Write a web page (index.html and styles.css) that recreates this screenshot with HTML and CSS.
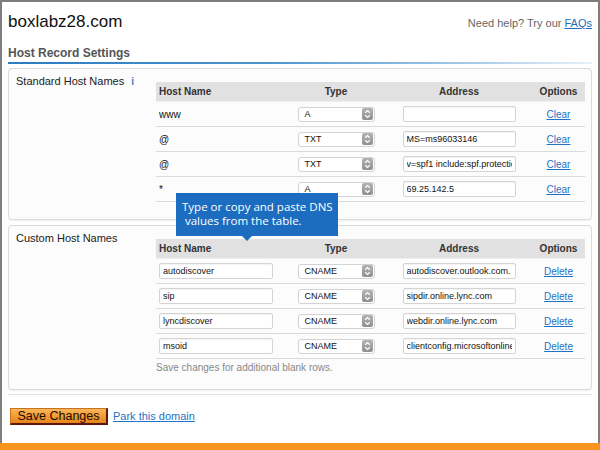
FILE: index.html
```html
<!DOCTYPE html>
<html>
<head>
<meta charset="utf-8">
<link rel="stylesheet" href="styles.css">
</head>
<body>
<div class="page">
  <div class="frame">
    <header class="top">
      <h1 class="domain">boxlabz28.com</h1>
      <div class="help">Need help? Try our <a href="#">FAQs</a></div>
    </header>
    <h2 class="section">Host Record Settings</h2>
    <div class="rule"></div>

    <section class="panel">
      <div class="panel-label">Standard Host Names <span class="info">i</span></div>
      <div class="panel-body">
        <table class="dns">
          <colgroup><col class="w-host"><col class="w-type"><col class="w-addr"><col class="w-opt"></colgroup>
          <thead><tr><th class="c-host">Host Name</th><th>Type</th><th>Address</th><th class="c-opt">Options</th></tr></thead>
          <tbody>
            <tr><td class="c-host">www</td><td><div class="sel"><span>A</span><span class="step"><svg width="7" height="10" viewBox="0 0 7 10"><path d="M1.2 3.8 L3.5 1.6 L5.8 3.8 M1.2 6.2 L3.5 8.4 L5.8 6.2" fill="none" stroke="#fff" stroke-width="1.2"/></svg></span></div></td><td><input class="field" value=""></td><td class="c-opt"><a href="#">Clear</a></td></tr>
            <tr><td class="c-host">@</td><td><div class="sel"><span>TXT</span><span class="step"><svg width="7" height="10" viewBox="0 0 7 10"><path d="M1.2 3.8 L3.5 1.6 L5.8 3.8 M1.2 6.2 L3.5 8.4 L5.8 6.2" fill="none" stroke="#fff" stroke-width="1.2"/></svg></span></div></td><td><input class="field" value="MS=ms96033146"></td><td class="c-opt"><a href="#">Clear</a></td></tr>
            <tr><td class="c-host">@</td><td><div class="sel"><span>TXT</span><span class="step"><svg width="7" height="10" viewBox="0 0 7 10"><path d="M1.2 3.8 L3.5 1.6 L5.8 3.8 M1.2 6.2 L3.5 8.4 L5.8 6.2" fill="none" stroke="#fff" stroke-width="1.2"/></svg></span></div></td><td><input class="field" value="v=spf1 include:spf.protection.outlook.com -all"></td><td class="c-opt"><a href="#">Clear</a></td></tr>
            <tr><td class="c-host">*</td><td><div class="sel"><span>A</span><span class="step"><svg width="7" height="10" viewBox="0 0 7 10"><path d="M1.2 3.8 L3.5 1.6 L5.8 3.8 M1.2 6.2 L3.5 8.4 L5.8 6.2" fill="none" stroke="#fff" stroke-width="1.2"/></svg></span></div></td><td><input class="field" value="69.25.142.5"></td><td class="c-opt"><a href="#">Clear</a></td></tr>
          </tbody>
        </table>
      </div>
    </section>

    <section class="panel custom">
      <div class="panel-label">Custom Host Names</div>
      <div class="panel-body">
        <table class="dns">
          <colgroup><col class="w-host"><col class="w-type"><col class="w-addr"><col class="w-opt"></colgroup>
          <thead><tr><th class="c-host">Host Name</th><th>Type</th><th>Address</th><th class="c-opt">Options</th></tr></thead>
          <tbody>
            <tr><td class="c-host"><input class="field host" value="autodiscover"></td><td><div class="sel"><span>CNAME</span><span class="step"><svg width="7" height="10" viewBox="0 0 7 10"><path d="M1.2 3.8 L3.5 1.6 L5.8 3.8 M1.2 6.2 L3.5 8.4 L5.8 6.2" fill="none" stroke="#fff" stroke-width="1.2"/></svg></span></div></td><td><input class="field" value="autodiscover.outlook.com."></td><td class="c-opt"><a href="#">Delete</a></td></tr>
            <tr><td class="c-host"><input class="field host" value="sip"></td><td><div class="sel"><span>CNAME</span><span class="step"><svg width="7" height="10" viewBox="0 0 7 10"><path d="M1.2 3.8 L3.5 1.6 L5.8 3.8 M1.2 6.2 L3.5 8.4 L5.8 6.2" fill="none" stroke="#fff" stroke-width="1.2"/></svg></span></div></td><td><input class="field" value="sipdir.online.lync.com"></td><td class="c-opt"><a href="#">Delete</a></td></tr>
            <tr><td class="c-host"><input class="field host" value="lyncdiscover"></td><td><div class="sel"><span>CNAME</span><span class="step"><svg width="7" height="10" viewBox="0 0 7 10"><path d="M1.2 3.8 L3.5 1.6 L5.8 3.8 M1.2 6.2 L3.5 8.4 L5.8 6.2" fill="none" stroke="#fff" stroke-width="1.2"/></svg></span></div></td><td><input class="field" value="webdir.online.lync.com"></td><td class="c-opt"><a href="#">Delete</a></td></tr>
            <tr><td class="c-host"><input class="field host" value="msoid"></td><td><div class="sel"><span>CNAME</span><span class="step"><svg width="7" height="10" viewBox="0 0 7 10"><path d="M1.2 3.8 L3.5 1.6 L5.8 3.8 M1.2 6.2 L3.5 8.4 L5.8 6.2" fill="none" stroke="#fff" stroke-width="1.2"/></svg></span></div></td><td><input class="field" value="clientconfig.microsoftonline-p.net"></td><td class="c-opt"><a href="#">Delete</a></td></tr>
          </tbody>
        </table>
        <p class="note">Save changes for additional blank rows.</p>
      </div>
    </section>

    <div class="sep"></div>
    <div class="actions">
      <button class="save">Save Changes</button>
      <a class="park" href="#">Park this domain</a>
    </div>
  </div>
  <div class="orange"></div>

  <div class="tip">Type or copy and paste DNS<br>&nbsp;values from the table.</div>
</div>
</body>
</html>
```

FILE: styles.css
```css
html, body {
  margin: 0;
  padding: 0;
  background: #fff;
}
body {
  font-family: "Liberation Sans", Arial, Helvetica, sans-serif;
}
.page {
  position: relative;
  width: 600px;
  height: 450px;
  display: flex;
  flex-direction: column;
  overflow: hidden;
}
.frame {
  flex: 1;
  border: 2px solid #7e7e7e;
  border-bottom: 0;
  padding: 0 6px;
}
.orange {
  height: 7px;
  background: #f7941d;
}

.top {
  display: flex;
  justify-content: space-between;
  align-items: baseline;
  margin-top: 10px;
}
.domain {
  margin: 0;
  font-size: 17px;
  font-weight: normal;
  line-height: 20px;
  color: #111;
}
.help {
  font-size: 11px;
  color: #666;
}
.help a {
  color: #1d6fb8;
  text-decoration: underline;
}

.section {
  margin: 14px 0 0;
  font-size: 12px;
  line-height: 14px;
  font-weight: bold;
  color: #555;
}
.rule {
  margin-top: 2px;
  height: 2px;
  background: linear-gradient(to right, #2a7cc1 0%, #4d95cf 45%, #a9cbe8 80%, #e8f1f9 100%);
}

.panel {
  margin-top: 4px;
  display: flex;
  border: 1px solid #dadada;
  border-radius: 4px;
  background: #fcfcfc;
  padding: 6px 6px 17px 7px;
  box-shadow: 0 1px 2px rgba(0, 0, 0, 0.07);
}
.panel.custom {
  margin-top: 5px;
  padding-bottom: 15px;
}
.panel-label {
  width: 140px;
  flex: none;
  font-size: 11px;
  line-height: 13px;
  color: #222;
}
.info {
  color: #3a80c4;
  font-weight: bold;
  font-size: 10px;
  margin-left: 4px;
}
.panel-body {
  padding-top: 7px;
}

.dns {
  border-collapse: collapse;
  width: 429px;
  table-layout: fixed;
}
.w-host { width: 136px; }
.w-type { width: 88px; }
.w-addr { width: 158px; }
.w-opt { width: 47px; }

.dns th {
  height: 19px;
  padding: 0;
  background: #e1e1e1;
  border-bottom: 1px solid #efefef;
  font-size: 10px;
  font-weight: bold;
  color: #333;
  text-align: center;
  vertical-align: middle;
}
.dns td {
  height: 24px;
  padding: 0;
  border-bottom: 1px solid #dadada;
  font-size: 10px;
  color: #111;
  text-align: center;
  vertical-align: middle;
}
.dns .c-host {
  text-align: left;
  padding-left: 3px;
}
.dns .c-opt {
  padding-right: 6px;
}
.dns td.c-opt a {
  color: #1f72c4;
  text-decoration: underline;
  font-size: 10px;
}

.sel {
  display: inline-flex;
  align-items: center;
  justify-content: space-between;
  width: 77px;
  height: 15px;
  box-sizing: border-box;
  border: 1px solid #d3d3d3;
  border-radius: 3px;
  background: #fff;
  padding: 0 1px 0 6px;
  font-size: 9px;
  color: #111;
  vertical-align: middle;
  text-align: left;
}
.step {
  width: 11px;
  height: 12px;
  border-radius: 2px;
  background: linear-gradient(#b3b3b3, #8f8f8f);
  display: flex;
  align-items: center;
  justify-content: center;
}

.field {
  box-sizing: border-box;
  width: 113px;
  height: 16px;
  margin: 0;
  border: 1px solid #d4d4d4;
  border-radius: 2px;
  padding: 0 3px;
  font: 9px "Liberation Sans", Arial, sans-serif;
  color: #111;
  background: #fff;
  box-shadow: inset 0 1px 1px rgba(0, 0, 0, 0.05);
  vertical-align: middle;
  outline: none;
}
.field.host {
  width: 114px;
}

.note {
  margin: 2px 0 0;
  font-size: 10px;
  line-height: 13px;
  color: #888;
}

.sep {
  margin-top: 4px;
  height: 1px;
  background: #e2e2e2;
}
.actions {
  display: flex;
  align-items: baseline;
  margin-top: 13px;
  padding-left: 2px;
  gap: 5px;
}
.save {
  height: 17px;
  width: 98px;
  padding: 0;
  border: 1px solid;
  border-color: #c4731f #5c1811 #5c1811 #c4731f;
  border-width: 1px 2px 2px 1px;
  background: linear-gradient(#fcb658, #f29c33 50%, #e5861b);
  font: 12.5px "Liberation Sans", Arial, sans-serif;
  color: #1a0a00;
  line-height: 14px;
}
.park {
  font-size: 11px;
  color: #1f72c4;
  text-decoration: underline;
}

.tip {
  position: absolute;
  left: 176px;
  top: 193px;
  width: 162px;
  height: 43px;
  box-sizing: border-box;
  background: #1c6dbf;
  color: #fff;
  font-family: "Open Sans", "Noto Sans", sans-serif;
  font-size: 11.5px;
  line-height: 14px;
  padding: 7px 0 0 6px;
}
.tip::after {
  content: "";
  position: absolute;
  left: 66px;
  top: 43px;
  border: 5px solid transparent;
  border-top-color: #1c6dbf;
  border-bottom: 0;
}
```
